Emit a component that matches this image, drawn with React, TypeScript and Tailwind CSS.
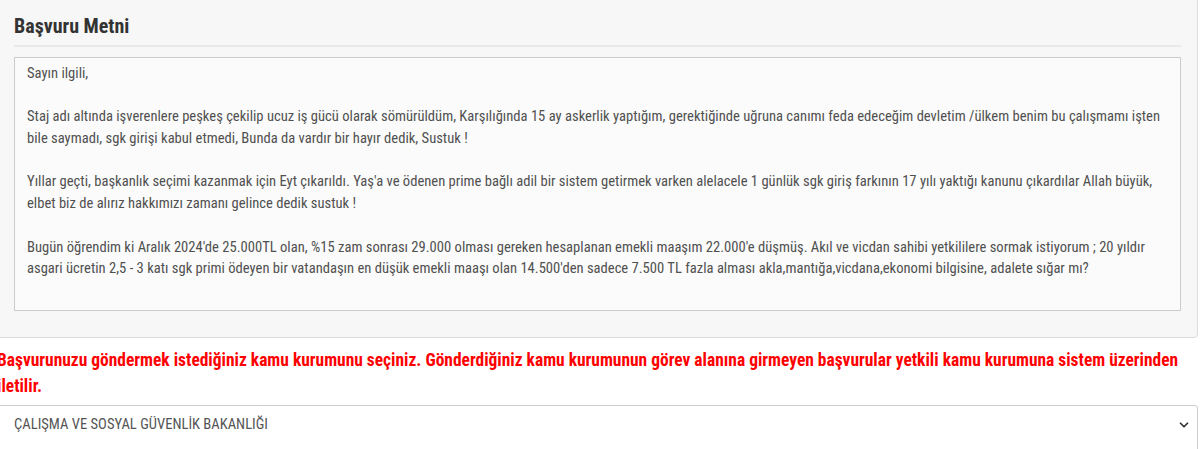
import { ChevronDown } from "lucide-react"

const paragraphs = [
  ["Sayın ilgili,"],
  [
    "Staj adı altında işverenlere peşkeş çekilip ucuz iş gücü olarak sömürüldüm, Karşılığında 15 ay askerlik yaptığım, gerektiğinde uğruna canımı feda edeceğim devletim /ülkem benim bu çalışmamı işten",
    "bile saymadı, sgk girişi kabul etmedi, Bunda da vardır bir hayır dedik, Sustuk !",
  ],
  [
    "Yıllar geçti, başkanlık seçimi kazanmak için Eyt çıkarıldı. Yaş'a ve ödenen prime bağlı adil bir sistem getirmek varken alelacele 1 günlük sgk giriş farkının 17 yılı yaktığı kanunu çıkardılar Allah büyük,",
    "elbet biz de alırız hakkımızı zamanı gelince dedik sustuk !",
  ],
  [
    "Bugün öğrendim ki Aralık 2024'de 25.000TL olan, %15 zam sonrası 29.000 olması gereken hesaplanan emekli maaşım 22.000'e düşmüş. Akıl ve vicdan sahibi yetkililere sormak istiyorum ; 20 yıldır",
    "asgari ücretin 2,5 - 3 katı sgk primi ödeyen bir vatandaşın en düşük emekli maaşı olan 14.500'den sadece 7.500 TL fazla alması akla,mantığa,vicdana,ekonomi bilgisine, adalete sığar mı?",
  ],
]

export default function App() {
  return (
    <div className="h-[449px] w-[1200px] overflow-hidden bg-white font-['Roboto',sans-serif] [font-stretch:75%]">
      <div className="-ml-[3px] w-[1201px]">
        <div className="-mt-[10px] rounded-b-[4px] border border-[#dcdcdc] bg-[#f7f7f7] px-[16px] pb-[26px] pt-[24px]">
          <h3 className="border-b-2 border-[#e9e9e9] pb-[8px] text-[20px] font-bold leading-[22px] text-[#333]">
            Başvuru Metni
          </h3>
          <div className="mt-[10px] h-[254px] border border-[#cccccc] bg-[#fbfbfb] px-[12px] pt-[5px] text-[14.6px] leading-[21.7px] text-[#505050]">
            {paragraphs.map((lines, i) => (
              <div key={i} className="mb-[21.7px]">
                {lines.map((line, j) => (
                  <div key={j} className="whitespace-nowrap">
                    {line}
                  </div>
                ))}
              </div>
            ))}
          </div>
        </div>
        <p className="mt-[9px] text-[17.45px] font-bold leading-[26px] text-[#ff0000]">
          <span className="whitespace-nowrap">
            Başvurunuzu göndermek istediğiniz kamu kurumunu seçiniz. Gönderdiğiniz kamu kurumunun görev alanına girmeyen başvurular yetkili kamu kurumuna sistem üzerinden
          </span>
          <br />
          iletilir.
        </p>
        <div className="mt-[6px] flex h-[50px] items-start justify-between rounded-t-[3px] border border-[#cccccc] bg-white pl-[16px] pr-[6px] pt-[8px] text-[14.6px] text-[#555]">
          <span>ÇALIŞMA VE SOSYAL GÜVENLİK BAKANLIĞI</span>
          <ChevronDown className="mt-[4px] h-[14px] w-[14px] text-[#333]" strokeWidth={3} />
        </div>
      </div>
    </div>
  )
}
